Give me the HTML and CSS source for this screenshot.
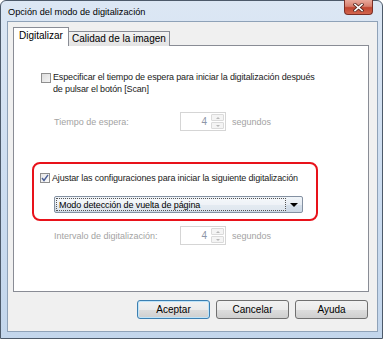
FILE: index.html
```html
<!DOCTYPE html>
<html lang="es">
<head>
    <meta charset="UTF-8">
    <title>Opción del modo de digitalización</title>
    <link rel="stylesheet" href="styles.css">
</head>
<body>
    <div class="window">
        <div class="titlebar">
            <span class="title">Opción del modo de digitalización</span>
            <div class="close">
                <svg width="11" height="9" viewBox="0 0 11 9">
                    <path d="M2 1.5 L9 7.5 M9 1.5 L2 7.5" stroke="#5a2a22" stroke-width="3.2" stroke-linecap="square"/>
                    <path d="M2 1.5 L9 7.5 M9 1.5 L2 7.5" stroke="#fff" stroke-width="1.6" stroke-linecap="square"/>
                </svg>
            </div>
        </div>

        <div class="client">
            <div class="tabs">
                <div class="tab active">Digitalizar</div>
                <div class="tab">Calidad de la imagen</div>
            </div>

            <div class="panel">
                <div class="check-row first">
                    <span class="checkbox"></span>
                    <span class="check-label">Especificar el tiempo de espera para iniciar la digitalización después<br>de pulsar el botón [Scan]</span>
                </div>

                <div class="field-row">
                    <span class="field-label">Tiempo de espera:</span>
                    <span class="spin">
                        <span class="spin-value">4</span>
                        <span class="spin-btns">
                            <span class="spin-btn"><i class="arrow up"></i></span>
                            <span class="spin-btn"><i class="arrow down"></i></span>
                        </span>
                    </span>
                    <span class="unit">segundos</span>
                </div>

                <div class="highlight">
                    <div class="check-row">
                        <span class="checkbox checked">
                            <svg width="8" height="8" viewBox="0 0 8 8">
                                <path d="M1 4 L3 6.5 L7 0.8" fill="none" stroke="#4a5f97" stroke-width="1.4"/>
                            </svg>
                        </span>
                        <span class="check-label">Ajustar las configuraciones para iniciar la siguiente digitalización</span>
                    </div>
                    <div class="combo">
                        <span class="combo-text"><span class="focus">Modo detección de vuelta de página</span></span>
                        <span class="combo-arrow"><i class="tri"></i></span>
                    </div>
                </div>

                <div class="field-row last">
                    <span class="field-label">Intervalo de digitalización:</span>
                    <span class="spin">
                        <span class="spin-value">4</span>
                        <span class="spin-btns">
                            <span class="spin-btn"><i class="arrow up"></i></span>
                            <span class="spin-btn"><i class="arrow down"></i></span>
                        </span>
                    </span>
                    <span class="unit">segundos</span>
                </div>
            </div>

            <div class="buttons">
                <button class="btn default">Aceptar</button>
                <button class="btn">Cancelar</button>
                <button class="btn">Ayuda</button>
            </div>
        </div>
    </div>
</body>
</html>
```

FILE: styles.css
```css
body {
    margin: 0;
    background: #fff;
    font-family: "Liberation Sans", Arial, sans-serif;
}
.window {
    width: 383px;
    height: 339px;
    box-sizing: border-box;
    border: 1px solid #4d5a6a;
    border-radius: 6px 6px 0 0;
    background: linear-gradient(to bottom, #dce7f4 0%, #cbdcf0 60%, #c3d6ec 100%);
    padding: 0 4px 6px 6px;
    display: flex;
    flex-direction: column;
}
.titlebar {
    height: 20px;
    display: flex;
    align-items: center;
    position: relative;
}
.title {
    font-size: 9.2px;
    color: #000;
    padding-left: 1px;
    margin-top: 2px;
}
.close {
    position: absolute;
    right: 5px;
    top: -1px;
    width: 29px;
    height: 15px;
    box-sizing: border-box;
    border: 1px solid #7b2f26;
    border-top: none;
    border-radius: 0 0 4px 4px;
    background: linear-gradient(to bottom, #e9a99b 0%, #d7806f 45%, #c0442f 55%, #d2664f 100%);
    display: flex;
    align-items: center;
    justify-content: center;
}
.client {
    flex: 1;
    background: #f0f0f0;
    border: 1px solid #8fa2b8;
    padding: 5px 8px 0 5px;
    display: flex;
    flex-direction: column;
}
.tabs {
    display: flex;
    align-items: flex-end;
    height: 19px;
    margin-bottom: -1px;
    position: relative;
    z-index: 1;
}
.tab {
    font-size: 10px;
    color: #000;
    border: 1px solid #898c95;
    border-bottom: none;
    height: 14px;
    line-height: 14px;
    padding: 0 3px;
    background: linear-gradient(to bottom, #f2f2f2, #e3e3e3);
}
.tab.active {
    background: #fff;
    height: 18px;
    line-height: 16px;
    padding: 0 5px;
    margin-right: -1px;
    position: relative;
    z-index: 2;
}
.panel {
    height: 247px;
    box-sizing: border-box;
    background: #fff;
    border: 1px solid #898c95;
    padding: 25px 0 0 18px;
}
.check-row {
    display: flex;
    align-items: flex-start;
    gap: 2px;
}
.first {
    margin-left: 9px;
}
.checkbox {
    width: 8px;
    height: 8px;
    margin-top: 1px;
    border: 1px solid #8f8f8f;
    background: linear-gradient(135deg, #dcdcdc, #f4f4f4);
    flex: none;
    display: flex;
    align-items: center;
    justify-content: center;
}
.checkbox.checked {
    background: linear-gradient(135deg, #e8e8e8, #fafafa);
}
.check-label {
    font-size: 9px;
    line-height: 12px;
    color: #1a1a1a;
    letter-spacing: -0.15px;
}
.first .checkbox {
    margin-top: 2px;
}
.field-row {
    display: flex;
    align-items: center;
    margin: 17px 0 0 22px;
    color: #a3a3a3;
    font-size: 9px;
}
.field-label {
    width: 126px;
}
.spin {
    width: 46px;
    height: 19px;
    box-sizing: border-box;
    border: 1px solid #d5d5d5;
    display: flex;
    background: #fff;
}
.spin-value {
    flex: 1;
    text-align: right;
    padding-right: 3px;
    line-height: 17px;
    color: #8d96a8;
    font-size: 10px;
}
.spin-btns {
    width: 13px;
    display: flex;
    flex-direction: column;
    padding: 1px;
    gap: 1px;
}
.spin-btn {
    flex: 1;
    border: 1px solid #dadada;
    border-radius: 1px;
    background: #f4f4f4;
    display: flex;
    align-items: center;
    justify-content: center;
}
.arrow {
    width: 0;
    height: 0;
    border-left: 2px solid transparent;
    border-right: 2px solid transparent;
}
.arrow.up {
    border-bottom: 2px solid #b8b8b8;
}
.arrow.down {
    border-top: 2px solid #b8b8b8;
}
.unit {
    margin-left: 6px;
}
.highlight {
    margin-top: 31px;
    width: 286px;
    height: 59px;
    box-sizing: border-box;
    border: 2px solid #e8121a;
    border-radius: 8px;
    padding: 8px 0 0 6px;
}
.combo {
    margin: 12px 0 0 14px;
    width: 249px;
    height: 17px;
    box-sizing: border-box;
    border: 1px solid #8491a2;
    border-radius: 2px;
    background: linear-gradient(to bottom, #f1f5f9 0%, #e6ecf3 50%, #d6e0eb 51%, #cdd9e6 100%);
    display: flex;
    padding: 1px;
}
.combo-text {
    flex: 1;
    font-size: 9px;
    letter-spacing: -0.1px;
    color: #000;
    display: flex;
}
.focus {
    flex: 1;
    border: 1px dotted #555;
    background: rgba(255, 255, 255, 0.35);
    line-height: 12px;
    padding-left: 2px;
}
.combo-arrow {
    width: 15px;
    display: flex;
    align-items: center;
    justify-content: center;
}
.tri {
    width: 0;
    height: 0;
    border-left: 4px solid transparent;
    border-right: 4px solid transparent;
    border-top: 4px solid #000;
}
.field-row.last {
    margin-top: 5px;
}
.buttons {
    display: flex;
    justify-content: flex-end;
    gap: 6px;
    margin-top: 8px;
    padding-right: 1px;
}
.btn {
    width: 73px;
    height: 19px;
    font-family: "Liberation Sans", Arial, sans-serif;
    font-size: 10px;
    color: #000;
    border: 1px solid #707070;
    border-radius: 3px;
    background: linear-gradient(to bottom, #f2f2f2 0%, #ebebeb 50%, #dddddd 51%, #cfcfcf 100%);
    padding: 0;
}
.btn.default {
    border-color: #3c7fb1;
    box-shadow: inset 0 0 0 1px #bfe4f9;
}
```
